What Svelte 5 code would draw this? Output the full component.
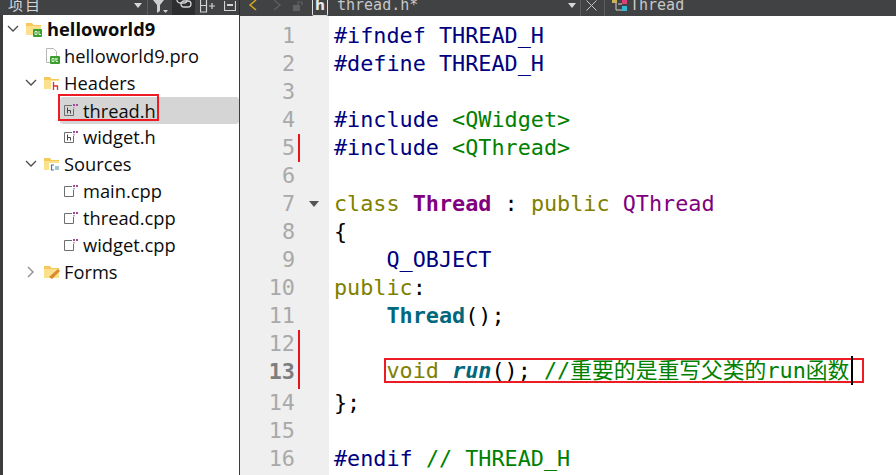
<script>
  const tree = [
    { name: 'helloworld9', depth: 0, bold: true, arrow: 'down', icon: 'qtfolder' },
    { name: 'helloworld9.pro', depth: 1, icon: 'pro' },
    { name: 'Headers', depth: 1, arrow: 'down', icon: 'hfolder' },
    { name: 'thread.h', depth: 2, icon: 'h', selected: true },
    { name: 'widget.h', depth: 2, icon: 'h' },
    { name: 'Sources', depth: 1, arrow: 'down', icon: 'cfolder' },
    { name: 'main.cpp', depth: 2, icon: 'cpp' },
    { name: 'thread.cpp', depth: 2, icon: 'cpp' },
    { name: 'widget.cpp', depth: 2, icon: 'cpp' },
    { name: 'Forms', depth: 1, arrow: 'right', icon: 'ffolder' }
  ];

  // each line: list of [class, text]
  const lines = [
    [['pre', '#ifndef'], ['mac', ' THREAD_H']],
    [['pre', '#define'], ['mac', ' THREAD_H']],
    [],
    [['pre', '#include'], ['pl', ' '], ['str', '<QWidget>']],
    [['pre', '#include'], ['pl', ' '], ['str', '<QThread>']],
    [],
    [['kw', 'class'], ['pl', ' '], ['type', 'Thread'], ['pl', ' : '], ['kw', 'public'], ['pl', ' '], ['qt', 'QThread']],
    [['pl', '{']],
    [['pl', '    '], ['mac', 'Q_OBJECT']],
    [['kw', 'public'], ['pl', ':']],
    [['pl', '    '], ['fn', 'Thread'], ['pl', '();']],
    [],
    [],
    [['pl', '};']],
    [],
    [['pre', '#endif'], ['pl', ' '], ['com', '// THREAD_H']]
  ];

  const indent = '    ';
  const changed = [5, 12, 13];
</script>

<div class="window">
  <header class="topbar">
    <div class="bar-left">
      <span class="bar-title">项目</span>
      <svg class="caret" width="8" height="5" viewBox="0 0 8 5"><path d="M0 0h8L4 5z" fill="#d8d8d8" /></svg>
      <span class="bar-sep sep-a"></span>
      <svg class="filter" width="16" height="14" viewBox="0 0 16 14"><path d="M0 0h11L7 5v6L4 13V5z" fill="#cfcfcf" /><path d="M10 10h5l-2.500 3z" fill="#cfcfcf" /></svg>
      <span class="link-btn">
        <svg width="16" height="10" viewBox="0 0 16 10" fill="none" stroke="#d4d4d4" stroke-width="1.300"><rect x="1" y="-3" width="10" height="6" rx="3" /><rect x="5" y="1" width="10" height="6" rx="3" /></svg>
      </span>
      <svg class="split" width="15" height="14" viewBox="0 0 15 14" fill="none" stroke="#d4d4d4" stroke-width="1.200"><path d="M.5 0v12h6V0M.5 5.500h6M9 6h6M12 3v6" /></svg>
      <svg class="panel" width="12" height="14" viewBox="0 0 12 14" fill="none" stroke="#d4d4d4" stroke-width="1.200"><path d="M.5 1v9.500h11V1" /><path d="M3 5h6" stroke-width="2" /></svg>
    </div>
    <div class="bar-right">
      <svg class="nav-back" width="10" height="12" viewBox="0 0 10 12" fill="none" stroke="#d6a520" stroke-width="1.500"><path d="M8 0 2 5l6 5" /></svg>
      <svg class="nav-fwd" width="10" height="12" viewBox="0 0 10 12" fill="none" stroke="#5c5e60" stroke-width="1.500"><path d="m2 0 6 5-6 5" /></svg>
      <svg class="lock" width="12" height="12" viewBox="0 0 12 12"><path d="M1 5h7v6H1z" fill="#5f6163" /><path d="M6 5V2h4v3" fill="none" stroke="#5f6163" stroke-width="1.200" /></svg>
      <span class="file-badge">h</span>
      <span class="file-name">thread.h*</span>
      <span class="spacer"></span>
      <svg class="tab-caret" width="8" height="5" viewBox="0 0 8 5"><path d="M0 0h8L4 5z" fill="#d8d8d8" /></svg>
      <span class="bar-sep"></span>
      <svg class="close" width="11" height="11" viewBox="0 0 11 11" stroke="#c4c4c4" stroke-width="1"><path d="M.5.500l10 10M10.500.500l-10 10" /></svg>
      <span class="bar-sep"></span>
      <svg class="class-icon" width="17" height="14" viewBox="0 0 17 14"><rect x="0" y="0" width="5" height="3" fill="#c8b25a" /><rect x="10" y="0" width="5" height="4" fill="#d8407a" /><rect x="10" y="6" width="5" height="5" fill="#35b8d0" /><path d="M4 3v7h6M6 4h4" fill="none" stroke="#cfcfcf" /></svg>
      <span class="class-name">Thread</span>
    </div>
  </header>

  <main class="body">
    <aside class="sidebar">
      {#each tree as row}
        <div class="row depth{row.depth}">
          <span class="arrow">
            {#if row.arrow === 'down'}
              <svg width="12" height="8" viewBox="0 0 12 8" fill="none" stroke="#4a4a4a" stroke-width="1.300"><path d="m1 1 5 5 5-5" /></svg>
            {:else if row.arrow === 'right'}
              <svg width="8" height="12" viewBox="0 0 8 12" fill="none" stroke="#8a8a8a" stroke-width="1.300"><path d="m1 1 5 5-5 5" /></svg>
            {/if}
          </span>
          <span class="row-inner" class:selected={row.selected}>
            <span class="label-wrap" class:marked={row.selected}>
              <svg class="icon" width="16" height="16" viewBox="0 0 16 16">
                {#if row.icon === 'h' || row.icon === 'cpp'}
                  <path d="M1.500 3.500h7.500M1.500 3.500v10h9V7" fill="none" stroke="#6e6e6e" />
                  <rect x="10" y="2" width="2" height="2" fill="#a4489c" /><rect x="13" y="2" width="2" height="2" fill="#a4489c" />
                  <rect x="10" y="5" width="2" height="1.500" fill="#c9a0c5" />
                  {#if row.icon === 'h'}
                    <path d="M4.500 5.500v6M4.500 8.500h3v3" fill="none" stroke="#444" />
                  {/if}
                {:else if row.icon === 'pro'}
                  <path d="M2.500.500h7l3 3v6M2.500.500v14h4" fill="none" stroke="#b8b8b8" />
                  <rect x="6" y="8" width="10" height="8" rx="1" fill="#3aa02c" />
                  <path d="M8 10.500h2v3H8zM12 10v3.500h2M11 11h3" fill="none" stroke="#fff" stroke-width=".8" />
                {:else}
                  <path d="M0 2h6l1.500 2H15v10H0z" fill="#f6c95a" />
                  <path d="M0 5h15v9H0z" fill="#fbe08e" />
                  {#if row.icon === 'qtfolder'}
                    <rect x="7" y="8" width="9" height="8" rx="1" fill="#3aa02c" />
                    <path d="M9 10.500h2v3H9zM13 10v3.500h2" fill="none" stroke="#fff" stroke-width=".8" />
                  {:else if row.icon === 'hfolder'}
                    <rect x="7" y="6" width="9" height="10" fill="#fff" />
                    <path d="M9.500 7v8M9.500 11h4v4" fill="none" stroke="#d8322a" stroke-width="1.300" />
                  {:else if row.icon === 'cfolder'}
                    <rect x="5" y="7" width="11" height="9" fill="#fff" />
                    <path d="M10 9H7.500v5H10" fill="none" stroke="#3a7ca5" stroke-width="1.200" />
                    <path d="M11 11h4M11 13h4" stroke="#3a7ca5" stroke-width=".9" />
                  {:else}
                    <path d="M5 13 14 5l2 2-8 8z" fill="#d98a2b" />
                  {/if}
                {/if}
              </svg>
              <span class="label" class:bold={row.bold}>{row.name}</span>
            </span>
          </span>
        </div>
      {/each}
    </aside>

    <section class="editor">
      {#each lines as parts, i}
        <div class="line" class:tall={i === 12}>
          <span class="num" class:current={i === 12} class:dirty={changed.includes(i + 1)}>{i + 1}</span>
          <span class="fold">
            {#if i === 6}
              <svg width="10" height="6" viewBox="0 0 10 6"><path d="M0 0h10L5 6z" fill="#555" /></svg>
            {/if}
          </span>
          <code class="text">
            {#if i === 12}
              <span class="pl">{indent}</span><span class="boxed"><span class="kw">void</span><span class="pl">{' '}</span><span class="run">run</span><span class="pl">{'(); '}</span><span class="com">//重要的是重写父类的run函数</span><span class="caret-bar"></span></span>
            {:else}
              {#each parts as [cls, txt]}<span class={cls}>{txt}</span>{/each}
            {/if}
          </code>
        </div>
      {/each}
    </section>
  </main>
</div>

<style>
  :global(body) {
    margin: 0;
    overflow: hidden;
    background: #fff;
  }

  .window {
    width: 896px;
    height: 475px;
    display: flex;
    flex-direction: column;
    overflow: hidden;
  }

  .topbar {
    height: 16px;
    flex: none;
    display: flex;
    background: #404244;
    color: #d6d6d6;
    overflow: hidden;
  }

  .bar-left {
    width: 240px;
    flex: none;
    box-sizing: border-box;
    padding-left: 8px;
    display: flex;
    align-items: flex-start;
    border-right: 1px solid #2a2a2a;
  }

  .bar-title {
    font-family: "Noto Sans CJK SC", sans-serif;
    font-size: 15px;
    letter-spacing: 2px;
    line-height: 16px;
    margin-top: -4px;
    width: 126px;
    height: 20px;
    flex: none;
  }

  .caret { margin-top: 3px; }

  .bar-sep {
    width: 1px;
    height: 16px;
    background: #5a5c5e;
    flex: none;
  }

  .sep-a { margin-left: 5px; }
  .filter { margin-left: 5px; }

  .link-btn {
    width: 23px;
    height: 16px;
    margin-left: 3px;
    background: #2c2e30;
    display: flex;
    align-items: flex-start;
    justify-content: center;
    flex: none;
  }

  .split { margin-left: 5px; }
  .panel { margin-left: 9px; margin-top: 0; }

  .bar-right {
    flex: 1;
    display: flex;
    align-items: flex-start;
    padding-left: 8px;
    min-width: 0;
  }

  .nav-back { flex: none; }
  .nav-fwd { flex: none; margin-left: 14px; }
  .lock { flex: none; margin: 0 0 0 10px; }

  .file-badge {
    width: 16px;
    height: 16px;
    margin-left: 8px;
    box-sizing: border-box;
    border: 1px solid #e0e0e0;
    border-top: 0;
    border-radius: 0 0 2px 2px;
    color: #e8e8e8;
    font: bold 14px/11px "DejaVu Sans", sans-serif;
    text-align: center;
    flex: none;
  }

  .file-name, .class-name {
    font-family: "DejaVu Sans Mono", monospace;
    font-size: 15px;
    line-height: 16px;
    margin-top: -3px;
    height: 19px;
    color: #c8c8c8;
    white-space: nowrap;
  }

  .file-name { margin-left: 9px; }

  .spacer { flex: 1; }

  .tab-caret { flex: none; margin-top: 3px; }
  .tab-caret + .bar-sep { margin-left: 4px; }
  .close { flex: none; margin: 0 7px 0 5px; }

  .class-icon { flex: none; margin-left: 7px; }
  .class-name { margin-left: 1px; width: 266px; flex: none; }

  .body {
    flex: 1;
    display: flex;
    min-height: 0;
  }

  .sidebar {
    width: 240px;
    flex: none;
    box-sizing: border-box;
    background: #fff;
    border-left: 3px solid #3a3c3e;
    border-right: 1px solid #3c3c3c;
    margin-top: -1px;
    font-family: "Open Sans", "Noto Sans", sans-serif;
    font-size: 18.300px;
    color: #0c0c0c;
  }

  .row {
    height: 27px;
    display: flex;
    align-items: center;
    box-sizing: border-box;
  }

  .depth0 { padding-left: 0; }
  .depth1 { padding-left: 18px; }
  .depth2 { padding-left: 38px; }

  .arrow {
    width: 20px;
    margin-right: 3px;
    flex: none;
    display: flex;
    justify-content: center;
    align-items: center;
  }

  .depth2 .arrow { width: 19px; }

  .row-inner {
    flex: 1;
    height: 27px;
    display: flex;
    align-items: center;
  }

  .row-inner.selected {
    background: #d5d5d5;
    margin-left: -3px;
    padding-left: 3px;
    margin-top: 1px;
    border-radius: 3px;
  }

  .label-wrap {
    position: relative;
    display: flex;
    align-items: center;
    gap: 4px;
    height: 24px;
  }

  /* red annotation drawn over the tree row */
  .label-wrap.marked::after {
    content: "";
    position: absolute;
    left: -5px;
    top: -4px;
    width: 101px;
    height: 27px;
    box-sizing: border-box;
    border: 2px solid #ed1c24;
  }

  .label.bold { font-weight: 700; margin-left: 1px; }

  .editor {
    flex: 1;
    min-width: 0;
    padding-top: 6px;
    background: linear-gradient(to right, #efefef 89px, #fff 89px);
  }

  .line {
    height: 28px;
    display: flex;
    align-items: flex-start;
  }

  .line.tall { height: 31px; }

  .num {
    width: 60px;
    height: 100%;
    flex: none;
    box-sizing: border-box;
    padding-right: 3px;
    text-align: right;
    border-right: 2px solid transparent;
    font: 21.800px "DejaVu Sans Mono", monospace;
    line-height: 28px;
    color: #a9a9a9;
  }

  .num.current {
    font-weight: 700;
    color: #7d7d7d;
  }

  .num.dirty {
    border-right-color: #e8141c;
  }

  .fold {
    width: 29px;
    height: 28px;
    flex: none;
    display: flex;
    align-items: center;
    padding-left: 9px;
    box-sizing: border-box;
  }

  .text {
    padding-left: 5px;
    white-space: pre;
    font: 21.800px "DejaVu Sans Mono", "Noto Sans CJK SC", monospace;
    line-height: 28px;
    color: #000;
  }

  .pre { color: #000080; }
  .mac { color: #000080; }
  .str { color: #008000; }
  .kw { color: #808000; }
  .type { color: #800080; font-weight: 700; }
  .qt { color: #800080; }
  .fn { color: #00677c; font-weight: 700; }
  .run { color: #00677c; font-weight: 700; font-style: italic; }
  .com { color: #008000; }
  .pl { color: #000; }

  .boxed {
    display: inline-block;
    position: relative;
    height: 25px;
    line-height: 26px;
    outline: 2px solid #ed1c24;
    outline-offset: -2px;
    margin-left: -3px;
    padding: 0 15px 0 3px;
    vertical-align: top;
  }

  .caret-bar {
    position: absolute;
    right: 11px;
    top: -2px;
    height: 29px;
    width: 2px;
    background: #000;
  }
</style>
